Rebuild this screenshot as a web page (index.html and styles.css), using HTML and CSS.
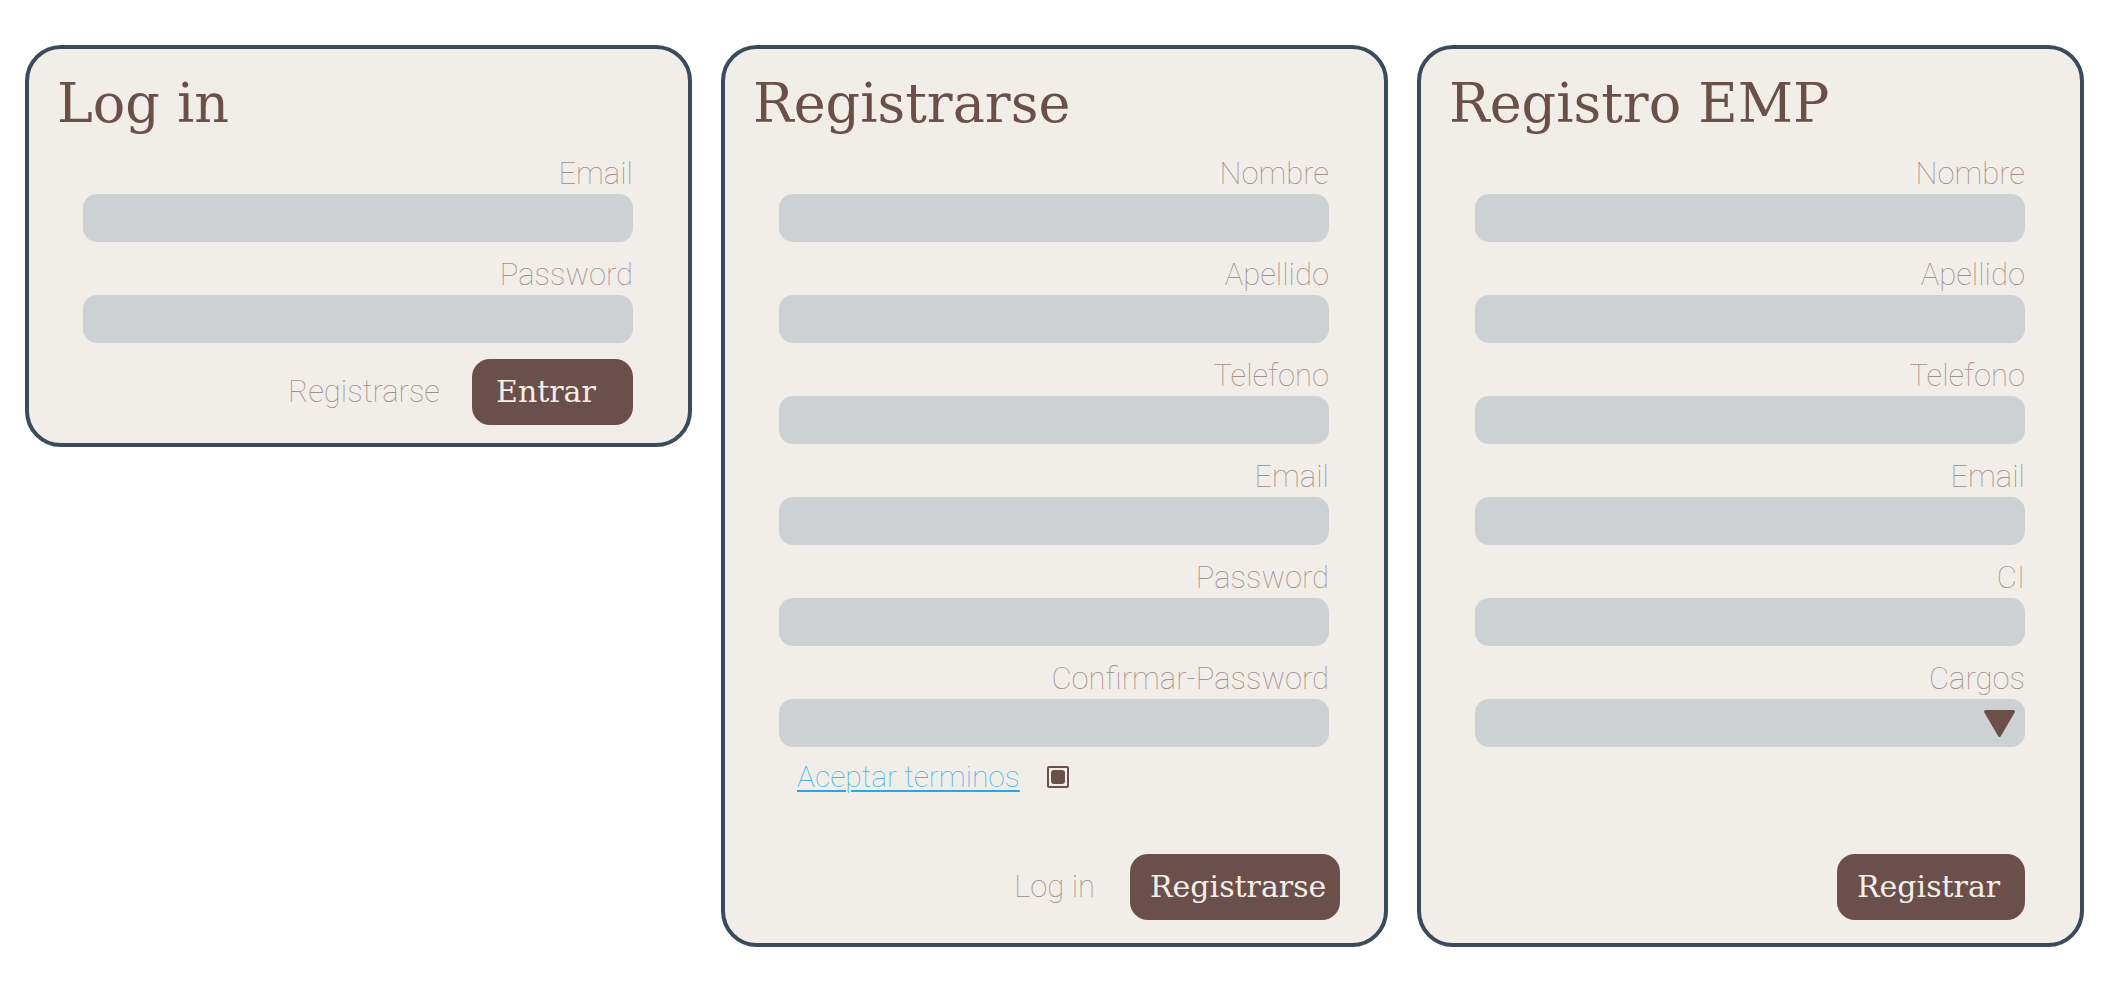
FILE: index.html
```html
<!DOCTYPE html>
<html lang="es">
<head>
<meta charset="utf-8">
<title>Formularios</title>
<link rel="stylesheet" href="styles.css">
</head>
<body>
<main class="page">
  <section class="card card-login">
    <h1 class="card-title">Log in</h1>
    <div class="field">
      <label class="field-label">Email</label>
      <input class="field-input" type="text">
    </div>
    <div class="field">
      <label class="field-label">Password</label>
      <input class="field-input" type="password">
    </div>
    <div class="actions actions-login">
      <a class="alt-link">Registrarse</a>
      <button class="btn btn-entrar">Entrar</button>
    </div>
  </section>

  <section class="card card-tall">
    <h1 class="card-title">Registrarse</h1>
    <div class="field">
      <label class="field-label">Nombre</label>
      <input class="field-input" type="text">
    </div>
    <div class="field">
      <label class="field-label">Apellido</label>
      <input class="field-input" type="text">
    </div>
    <div class="field">
      <label class="field-label">Telefono</label>
      <input class="field-input" type="text">
    </div>
    <div class="field">
      <label class="field-label">Email</label>
      <input class="field-input" type="text">
    </div>
    <div class="field">
      <label class="field-label">Password</label>
      <input class="field-input" type="password">
    </div>
    <div class="field">
      <label class="field-label">Confirmar-Password</label>
      <input class="field-input" type="password">
    </div>
    <div class="terms">
      <a class="terms-link">Aceptar terminos</a>
      <span class="check"><span class="check-mark"></span></span>
    </div>
    <div class="actions actions-bottom">
      <a class="alt-link alt-link-login">Log in</a>
      <button class="btn btn-registrarse">Registrarse</button>
    </div>
  </section>

  <section class="card card-tall">
    <h1 class="card-title">Registro EMP</h1>
    <div class="field">
      <label class="field-label">Nombre</label>
      <input class="field-input" type="text">
    </div>
    <div class="field">
      <label class="field-label">Apellido</label>
      <input class="field-input" type="text">
    </div>
    <div class="field">
      <label class="field-label">Telefono</label>
      <input class="field-input" type="text">
    </div>
    <div class="field">
      <label class="field-label">Email</label>
      <input class="field-input" type="text">
    </div>
    <div class="field">
      <label class="field-label">CI</label>
      <input class="field-input" type="text">
    </div>
    <div class="field">
      <label class="field-label">Cargos</label>
      <div class="field-input field-select">
        <svg class="select-arrow" width="33" height="29" viewBox="0 0 33 29" aria-hidden="true">
          <path d="M2.5 2.5 H30.5 L16.5 26.5 Z" fill="#6B4F4A" stroke="#6B4F4A" stroke-width="3" stroke-linejoin="round"/>
        </svg>
      </div>
    </div>
    <div class="actions actions-bottom">
      <button class="btn btn-registrar">Registrar</button>
    </div>
  </section>
</main>
</body>
</html>
```

FILE: styles.css
```css
body {
  margin: 0;
  background: #ffffff;
  font-family: Roboto, "Liberation Sans", sans-serif;
}

.page {
  display: flex;
  align-items: flex-start;
  gap: 29px;
  padding: 45px 25px;
}

.card {
  box-sizing: border-box;
  flex: none;
  width: 667px;
  background: #F1EEE9;
  border: 4px solid #3B4B5B;
  border-radius: 36px;
  padding: 23px 55px 18px 54px;
  display: flex;
  flex-direction: column;
}

.card-tall {
  height: 902px;
  padding-bottom: 23px;
}

.card-title {
  margin: 0 0 5px -26px;
  font-family: "DejaVu Serif", "Liberation Serif", serif;
  font-weight: 400;
  font-size: 54px;
  line-height: 64px;
  color: #6B4F4A;
}

.field {
  padding-top: 16px;
}

.field-label {
  display: block;
  text-align: right;
  margin-bottom: 3px;
  font-family: "Roboto Thin", Roboto, "Liberation Sans", sans-serif;
  font-weight: 100;
  font-size: 31px;
  line-height: 34px;
  color: #A18F8C;
}

.field-input {
  display: block;
  box-sizing: border-box;
  width: 100%;
  height: 48px;
  margin: 0;
  padding: 0 16px;
  border: none;
  outline: none;
  border-radius: 14px;
  background: #CDD1D4;
  font: inherit;
}

.field-select {
  display: flex;
  align-items: center;
  justify-content: flex-end;
  padding-right: 9px;
}

.select-arrow {
  display: block;
}

.actions {
  display: flex;
  align-items: center;
  justify-content: flex-end;
  gap: 32px;
}

.actions-login {
  margin-top: 16px;
}

.actions-bottom {
  margin-top: auto;
}

.alt-link {
  font-family: "Roboto Thin", Roboto, "Liberation Sans", sans-serif;
  font-weight: 100;
  font-size: 31px;
  line-height: 34px;
  color: #A18F8C;
}

.alt-link-login {
  margin-right: 3px;
}

.btn {
  box-sizing: border-box;
  height: 66px;
  border: none;
  border-radius: 18px;
  background: #6B4F4A;
  color: #F3EEE8;
  font-family: "DejaVu Serif", "Liberation Serif", serif;
  font-size: 30px;
  line-height: 66px;
  text-align: left;
  padding: 0 0 0 24px;
  margin: 0;
}

.btn-entrar {
  width: 161px;
}

.btn-registrarse {
  width: 210px;
  padding-left: 20px;
  margin-right: -11px;
}

.btn-registrar {
  width: 188px;
  padding-left: 20px;
}

.terms {
  display: flex;
  align-items: center;
  gap: 27px;
  margin-top: 13px;
  padding-left: 18px;
}

.terms-link {
  font-family: "Roboto Thin", Roboto, "Liberation Sans", sans-serif;
  font-weight: 100;
  font-size: 30px;
  line-height: 34px;
  color: #45B4E4;
  text-decoration: underline;
  text-decoration-color: #2BA6DE;
  text-decoration-thickness: 2px;
  text-underline-offset: 3px;
}

.check {
  box-sizing: border-box;
  width: 22px;
  height: 22px;
  border: 2px solid #6B4F4A;
  border-radius: 2px;
  padding: 2px;
  background: #F1EEE9;
  display: flex;
}

.check-mark {
  flex: 1;
  border-radius: 3px;
  background: #6B4F4A;
}
```
